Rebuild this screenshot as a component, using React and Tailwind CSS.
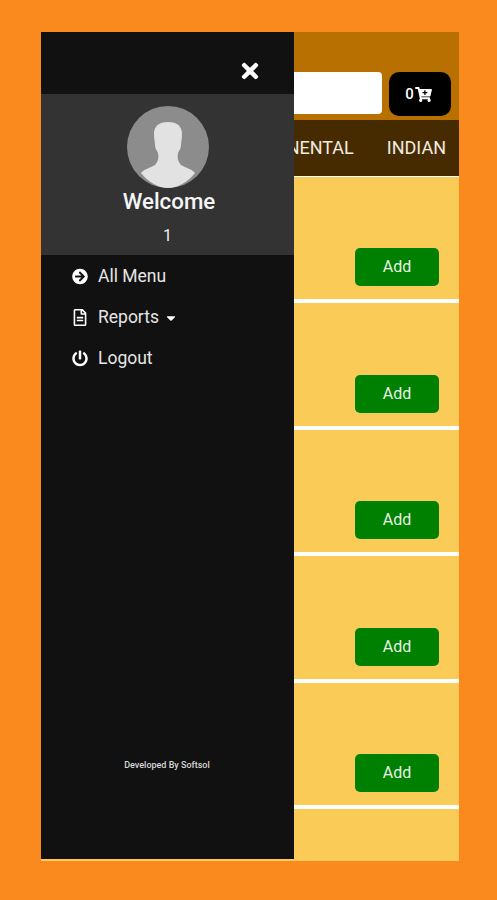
import React from 'react'
import { FaArrowCircleRight, FaRegFileAlt, FaPowerOff, FaTimes, FaCartPlus, FaCaretDown } from 'react-icons/fa'

const rows = [1, 2, 3, 4, 5]

const menu = [
    { label: 'All Menu', icon: FaArrowCircleRight },
    { label: 'Reports', icon: FaRegFileAlt, caret: true },
    { label: 'Logout', icon: FaPowerOff },
]

const Avatar = () => (
    <svg viewBox="0 0 82 82" className="block w-[82px] h-[82px]">
        <circle cx="41" cy="41" r="41" fill="#8c8c8c" />
        <path
            d="M41 16c-9 0-14 4-14 12 0 5 1 8 1 11 0 3 2 6 3 8 1 5 0 9-3 12-5 3-11 4-14 8 7 9 18 15 27 15s20-6 27-15c-3-4-9-5-14-8-3-3-4-7-3-12 1-2 3-5 3-8 0-3 1-6 1-11 0-8-5-12-14-12z"
            fill="#e2e2e2"
        />
    </svg>
)

const Drawer = () => (
    <div className="absolute left-0 top-0 w-[253px] h-[827px] bg-[#111111] flex flex-col text-white font-['Roboto',sans-serif]">
        <div className="h-[62px] flex items-center justify-end pr-[34px] pt-[16px]">
            <FaTimes className="text-[#ffffff] w-[20px] h-[24px]" />
        </div>
        <div className="h-[161px] bg-[#333333] flex flex-col items-center pt-[12px]">
            <Avatar />
            <div className="text-[22.3px] leading-[26px] font-medium pl-[3px] text-[#f5f5f5]">Welcome</div>
            <div className="text-[16px] leading-[20px] mt-[12px] text-[#eeeeee]">1</div>
        </div>
        <div className="flex flex-col pl-[31px] pt-[1px]">
            {menu.map((item) => (
                <div key={item.label} className="h-[41px] flex items-center text-[#e6e6e6] text-[17.5px]">
                    <item.icon className="w-[16px] h-[17px] text-white" />
                    <span className="ml-[10px]">{item.label}</span>
                    {item.caret && <FaCaretDown className="ml-[6px] w-[12px] h-[14px] text-white" />}
                </div>
            ))}
        </div>
        <div className="mt-[380px] text-center text-[9px] font-medium text-[#d8d8d8] pr-[1px]">Developed By Softsol</div>
    </div>
)

const App = () => {
    return (
        <div className="w-[497px] h-[900px] bg-[#fb8a1e] pl-[41px] pt-[32px] font-['Roboto',sans-serif]">
            <div className="relative w-[418px] h-[829px] bg-white overflow-hidden">
                <div className="h-[88px] bg-[#b87000] flex items-start justify-end pt-[40px] pr-[8px] gap-[7px]">
                    <div className="w-[300px] h-[42px] bg-white rounded-[4px]"></div>
                    <div className="w-[62px] h-[44px] bg-black rounded-[10px] flex items-center justify-center text-white text-[15px] font-medium pr-[3px]">
                        0<FaCartPlus className="ml-[1px] w-[17px] h-[15px]" />
                    </div>
                </div>
                <div className="h-[56px] bg-[#472b00] flex items-center justify-end gap-[33px] pr-[13px] pb-[2px] text-[18px] text-[#f0ece4]">
                    <span>CONTINENTAL</span>
                    <span>INDIAN</span>
                </div>
                <div className="pt-[1px] bg-white">
                    {rows.map((row) => (
                        <div key={row} className="h-[126.4px] bg-[#facc57] border-b-[4px] border-white flex justify-end items-end pb-[13px] pr-[20px]">
                            <button className="w-[84px] h-[38px] bg-[#008000] rounded-[5px] text-[#e4f1e4] text-[16px]">Add</button>
                        </div>
                    ))}
                    <div className="h-[60px] bg-[#facc57]"></div>
                </div>
                <Drawer />
            </div>
        </div>
    )
}

export default App
